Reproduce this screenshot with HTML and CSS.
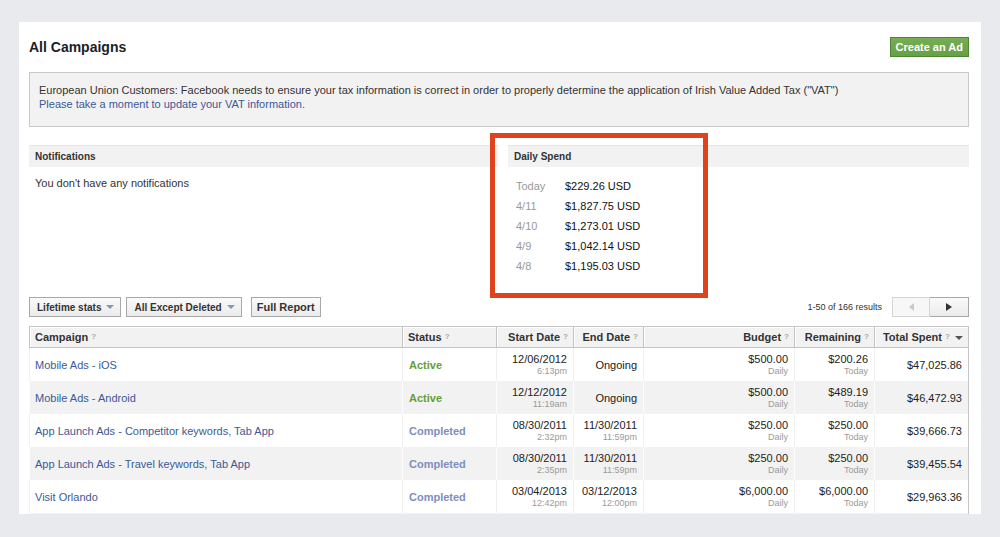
FILE: index.html
```html
<!DOCTYPE html>
<html lang="en">
  <head>
    <meta charset="UTF-8" />
    <title>All Campaigns</title>
    <link rel="stylesheet" href="styles.css">
  </head>
  <body>
    <div class="page">
      <div class="panel">
        <!-- Title -->
        <div class="head">
          <h1 class="title">All Campaigns</h1>
          <a class="btn-create">Create an Ad</a>
        </div>

        <!-- VAT notice -->
        <div class="notice">
          <p>European Union Customers: Facebook needs to ensure your tax information is correct in order to properly determine the application of Irish Value Added Tax ("VAT")</p>
          <a class="link">Please take a moment to update your VAT information.</a>
        </div>

        <!-- Notifications and spend -->
        <div class="boxes">
          <div class="box">
            <div class="box-head">Notifications</div>
            <p class="empty">You don't have any notifications</p>
          </div>
          <div class="box">
            <div class="box-head">Daily Spend</div>
            <ul class="spend-list">
              <li><span class="day">Today</span><span class="amt">$229.26 USD</span></li>
              <li><span class="day">4/11</span><span class="amt">$1,827.75 USD</span></li>
              <li><span class="day">4/10</span><span class="amt">$1,273.01 USD</span></li>
              <li><span class="day">4/9</span><span class="amt">$1,042.14 USD</span></li>
              <li><span class="day">4/8</span><span class="amt">$1,195.03 USD</span></li>
            </ul>
          </div>
        </div>

        <!-- Toolbar -->
        <div class="toolbar">
          <button class="drop">Lifetime stats <i class="caret"></i></button>
          <button class="drop second">All Except Deleted <i class="caret"></i></button>
          <button class="report">Full Report</button>
          <span class="results">1-50 of 166 results</span>
          <div class="pager">
            <button class="prev"><i class="tri-left"></i></button>
            <button class="next"><i class="tri-right"></i></button>
          </div>
        </div>

        <!-- Campaign table -->
        <table class="campaigns">
          <colgroup>
            <col style="width: 373px">
            <col style="width: 94px">
            <col style="width: 77px">
            <col style="width: 70px">
            <col style="width: 151px">
            <col style="width: 80px">
            <col style="width: 94px">
          </colgroup>
          <thead>
            <tr>
              <th>Campaign <span class="q">?</span></th>
              <th>Status <span class="q">?</span></th>
              <th class="num">Start Date <span class="q">?</span></th>
              <th class="num">End Date <span class="q">?</span></th>
              <th class="num">Budget <span class="q">?</span></th>
              <th class="num">Remaining <span class="q">?</span></th>
              <th class="num">Total Spent <span class="q">?</span> <i class="sort"></i></th>
            </tr>
          </thead>
          <tbody>
            <tr>
              <td><a class="link">Mobile Ads - iOS</a></td>
              <td class="active">Active</td>
              <td class="num"><span class="main">12/06/2012</span><span class="sub">6:13pm</span></td>
              <td class="num">Ongoing</td>
              <td class="num"><span class="main">$500.00</span><span class="sub">Daily</span></td>
              <td class="num"><span class="main">$200.26</span><span class="sub">Today</span></td>
              <td class="num">$47,025.86</td>
            </tr>
            <tr class="alt">
              <td><a class="link">Mobile Ads - Android</a></td>
              <td class="active">Active</td>
              <td class="num"><span class="main">12/12/2012</span><span class="sub">11:19am</span></td>
              <td class="num">Ongoing</td>
              <td class="num"><span class="main">$500.00</span><span class="sub">Daily</span></td>
              <td class="num"><span class="main">$489.19</span><span class="sub">Today</span></td>
              <td class="num">$46,472.93</td>
            </tr>
            <tr>
              <td><a class="link">App Launch Ads - Competitor keywords, Tab App</a></td>
              <td class="done">Completed</td>
              <td class="num"><span class="main">08/30/2011</span><span class="sub">2:32pm</span></td>
              <td class="num"><span class="main">11/30/2011</span><span class="sub">11:59pm</span></td>
              <td class="num"><span class="main">$250.00</span><span class="sub">Daily</span></td>
              <td class="num"><span class="main">$250.00</span><span class="sub">Today</span></td>
              <td class="num">$39,666.73</td>
            </tr>
            <tr class="alt">
              <td><a class="link">App Launch Ads - Travel keywords, Tab App</a></td>
              <td class="done">Completed</td>
              <td class="num"><span class="main">08/30/2011</span><span class="sub">2:35pm</span></td>
              <td class="num"><span class="main">11/30/2011</span><span class="sub">11:59pm</span></td>
              <td class="num"><span class="main">$250.00</span><span class="sub">Daily</span></td>
              <td class="num"><span class="main">$250.00</span><span class="sub">Today</span></td>
              <td class="num">$39,455.54</td>
            </tr>
            <tr>
              <td><a class="link">Visit Orlando</a></td>
              <td class="done">Completed</td>
              <td class="num"><span class="main">03/04/2013</span><span class="sub">12:42pm</span></td>
              <td class="num"><span class="main">03/12/2013</span><span class="sub">12:00pm</span></td>
              <td class="num"><span class="main">$6,000.00</span><span class="sub">Daily</span></td>
              <td class="num"><span class="main">$6,000.00</span><span class="sub">Today</span></td>
              <td class="num">$29,963.36</td>
            </tr>
            <tr class="alt">
              <td></td><td></td><td></td><td></td><td></td><td></td><td></td>
            </tr>
          </tbody>
        </table>

        <!-- annotation box over the spend panel -->
        <div class="highlight"></div>
      </div>
    </div>
  </body>
</html>
```

FILE: styles.css
```css
body {
  margin: 0;
  background: #e9eaed;
  font-family: "Liberation Sans", Arial, sans-serif;
  font-size: 11px;
  color: #333;
}
.page {
  padding: 22px 19px 0;
}
.panel {
  position: relative;
  height: 492px;
  overflow: hidden;
  background: #fff;
  padding: 0 12px 0 10px;
}
.link {
  color: #3b5998;
  text-decoration: none;
}

/* title row */
.head {
  display: flex;
  justify-content: space-between;
  align-items: center;
  height: 20px;
  padding-top: 15px;
}
.title {
  margin: 0;
  font-size: 14px;
  line-height: 20px;
  font-weight: bold;
  color: #1a1d28;
}
.btn-create {
  height: 20px;
  box-sizing: border-box;
  padding: 0 5px;
  background: linear-gradient(#77ad54, #66a047);
  border: 1px solid #4f8634;
  color: #fff;
  font-weight: bold;
  line-height: 18px;
}

/* notice */
.notice {
  margin-top: 15px;
  height: 55px;
  box-sizing: border-box;
  padding: 10px 9px 0;
  background: #f2f2f2;
  border: 1px solid #c9c9c9;
  line-height: 14px;
}
.notice p {
  margin: 0;
}

/* notifications + spend */
.boxes {
  display: grid;
  grid-template-columns: 469px 1fr;
  column-gap: 10px;
  margin-top: 18px;
  margin-bottom: 21px;
}
.box-head {
  height: 22px;
  box-sizing: border-box;
  padding: 0 6px;
  background: #f2f2f2;
  border-top: 1px solid #e4e4e4;
  font-size: 10px;
  font-weight: bold;
  line-height: 21px;
  color: #333;
}
.empty {
  margin: 0;
  padding: 9px 6px 0;
  line-height: 14px;
}
.spend-list {
  list-style: none;
  margin: 0;
  padding: 9px 8px 0;
}
.spend-list li {
  display: flex;
  line-height: 20px;
}
.day {
  width: 49px;
  color: #999;
}
.amt {
  color: #111;
}

/* toolbar */
.toolbar {
  display: flex;
  align-items: center;
  height: 20px;
}
.toolbar button {
  height: 20px;
  box-sizing: border-box;
  margin: 0;
  border: 1px solid #a8a8a8;
  background: linear-gradient(#fafafa, #ebebeb);
  font-family: inherit;
  font-weight: bold;
  color: #333;
}
.drop {
  display: flex;
  align-items: center;
  gap: 5px;
  padding: 0 6px 0 7px;
  font-size: 10px;
}
.drop.second {
  margin-left: 5px;
}
.caret {
  width: 0;
  height: 0;
  border-left: 4px solid transparent;
  border-right: 4px solid transparent;
  border-top: 4px solid #8595bb;
}
.toolbar .report {
  margin-left: 9px;
  padding: 0 5px;
  font-size: 11px;
}
.results {
  margin-left: auto;
  margin-right: 10px;
  font-size: 9px;
  color: #333;
}
.pager {
  display: flex;
}
.pager button {
  display: flex;
  align-items: center;
  justify-content: center;
  width: 38px;
  padding: 0;
}
.pager .prev {
  border-color: #d6d6d6;
  background: #f7f7f7;
}
.pager .next {
  width: 39px;
  border-left: 0;
}
.tri-left {
  width: 0;
  height: 0;
  border-top: 4px solid transparent;
  border-bottom: 4px solid transparent;
  border-right: 5px solid #c9c9c9;
}
.tri-right {
  width: 0;
  height: 0;
  border-top: 4px solid transparent;
  border-bottom: 4px solid transparent;
  border-left: 6px solid #333;
}

/* table */
.campaigns {
  margin-top: 9px;
  width: 940px;
  border-collapse: collapse;
  table-layout: fixed;
  border-left: 1px solid #bdbdbd;
  border-right: 1px solid #c6c6c6;
}
.campaigns th {
  height: 20px;
  padding: 0 5px;
  background: #f2f2f2;
  border: 1px solid #c4c4c4;
  box-shadow: inset 1px 1px 0 #fff;
  text-align: left;
  font-size: 11px;
  font-weight: bold;
  color: #333;
  white-space: nowrap;
}
.campaigns th.num {
  text-align: right;
}
.q {
  font-size: 8px;
  color: #aaa;
  vertical-align: 2px;
}
.sort {
  display: inline-block;
  width: 0;
  height: 0;
  margin-left: 2px;
  vertical-align: 1px;
  border-left: 4px solid transparent;
  border-right: 4px solid transparent;
  border-top: 4px solid #555;
}
.campaigns td {
  height: 33px;
  padding: 0 6px;
  border-left: 1px solid #f0f0f0;
  vertical-align: middle;
  white-space: nowrap;
}
.campaigns td:first-child {
  padding-left: 5px;
}
.campaigns tr.alt td {
  background: #f2f2f2;
  border-left-color: #fcfcfc;
}
.campaigns td.num {
  text-align: right;
  color: #222;
}
.main {
  display: block;
  line-height: 14px;
}
.sub {
  display: block;
  font-size: 9px;
  line-height: 11px;
  color: #9a9a9a;
}
.active {
  color: #64a034;
  font-weight: bold;
}
.done {
  color: #7d8ec0;
  font-weight: bold;
}

/* annotation */
.highlight {
  position: absolute;
  left: 471px;
  top: 111px;
  width: 218px;
  height: 165px;
  box-sizing: border-box;
  border: 5px solid #e0431c;
}
```
